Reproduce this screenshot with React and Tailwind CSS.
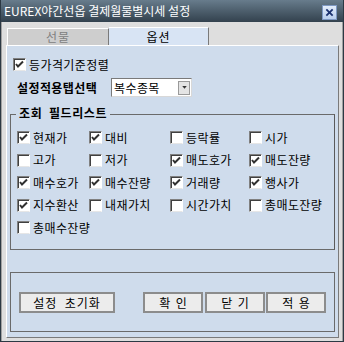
import React from "react";

const font = { fontFamily: '"Noto Sans CJK KR", "Noto Sans", sans-serif' };

function Check({ checked, label }) {
  return (
    <label className="flex items-center h-[13px] gap-[3px] text-[12px] text-black leading-none whitespace-nowrap tracking-[0.4px]">
      <span className="relative w-[13px] h-[13px] shrink-0 bg-white border border-t-[#808080] border-l-[#808080] border-r-white border-b-[#e6e6e6] shadow-[inset_1px_1px_0_#404040]">
        {checked && (
          <svg viewBox="0 0 13 13" className="absolute -left-px -top-px w-[13px] h-[13px]">
            <path d="M3 6 L5 8.5 L10 3.5" fill="none" stroke="#303030" strokeWidth="2" />
          </svg>
        )}
      </span>
      <span>{label}</span>
    </label>
  );
}

function Btn({ children, className = "" }) {
  return (
    <button className={`h-[21px] bg-[#ececec] border-2 border-[#8c8c8c] text-[12px] text-black leading-none ${className}`}>
      {children}
    </button>
  );
}

const fields = [
  ["현재가", true], ["대비", true], ["등락률", false], ["시가", false],
  ["고가", false], ["저가", false], ["매도호가", true], ["매도잔량", true],
  ["매수호가", true], ["매수잔량", true], ["거래량", true], ["행사가", true],
  ["지수환산", true], ["내재가치", false], ["시간가치", false], ["총매도잔량", false],
  ["총매수잔량", false],
];

export default function App() {
  return (
    <div style={font} className="w-[344px] h-[342px] flex flex-col bg-[#dedede] border border-[#2c3944] border-t-0 overflow-hidden">
      {/* title bar */}
      <div className="h-[22px] shrink-0 flex items-center justify-between pl-[3px] pr-[6px] bg-gradient-to-b from-[#687c8c] to-[#33424e]">
        <span className="text-white text-[12px] leading-none">EUREX야간선옵 결제월물별시세 설정</span>
        <span className="w-[15px] h-[15px] mt-[2px] flex items-center justify-center bg-gradient-to-b from-[#e2ecfa] to-[#b9cfee] border border-[#7d98c2]">
          <svg viewBox="0 0 10 10" className="w-[9px] h-[9px]">
            <path d="M1.5 1.5 L8.5 8.5 M8.5 1.5 L1.5 8.5" stroke="#1b3270" strokeWidth="2" />
          </svg>
        </span>
      </div>

      {/* body */}
      <div className="flex-1 flex flex-col pl-[4px] pr-[3px] pb-[3px] pt-[5px] border-l border-r border-[#a0a0a0]">
        {/* tabs */}
        <div className="flex items-end h-[18px] pl-[1px]">
          <div className="w-[102px] h-[17px] flex items-center justify-center bg-[#cecece] border-t border-l border-white border-r border-r-[#7a7a7a] text-[12px] text-[#808080] leading-none tracking-[1px]">
            선물
          </div>
          <div className="w-[100px] h-[18px] flex items-center justify-center bg-[#d8e4f4] border-t border-white border-r border-r-[#7a7a7a] text-[12px] text-black leading-none tracking-[1px]">
            옵션
          </div>
        </div>

        {/* panel */}
        <div className="flex-1 flex flex-col bg-[#cfdcec] border border-t-white border-l-white border-r-[#7a7a7a] border-b-[#7a7a7a] px-[3px] pb-[3px]">
          <div className="pt-[12px] pl-[3px]">
            <Check checked label="등가격기준정렬" />
          </div>

          <div className="flex items-center mt-[7px] pl-[7px] h-[19px]">
            <span className="w-[94px] text-[12px] font-bold tracking-[0.4px] leading-none">설정적용탭선택</span>
            <div className="w-[81px] h-[19px] bg-white border border-t-[#7a7a7a] border-l-[#7a7a7a] border-r-[#d8d8d8] border-b-[#d8d8d8] flex items-center pl-[2px] pr-[1px]">
              <span className="flex-1 text-[12px] leading-none tracking-[0.4px]">복수종목</span>
              <span className="w-[12px] h-[14px] bg-[#e4e4e4] border border-[#9a9a9a] flex items-center justify-center">
                <svg viewBox="0 0 6 4" className="w-[5px] h-[3px]">
                  <path d="M0 0 H6 L3 3.5 Z" fill="#333" />
                </svg>
              </span>
            </div>
          </div>

          {/* field list group */}
          <div className="relative mt-[17px] h-[136px] border border-[#6a6a6a] border-r-[#5a5a5a]">
            <span className="absolute -top-[8px] left-[5px] px-[3px] bg-[#cfdcec] text-[12px] font-bold leading-none tracking-[0.6px]">
              조회&nbsp; 필드리스트
            </span>
            <div className="grid grid-cols-[72px_81px_79px_1fr] gap-y-[9.5px] pt-[16px] pl-[6px]">
              {fields.map(([l, c]) => (
                <Check key={l} checked={c} label={l} />
              ))}
            </div>
          </div>

          {/* buttons group */}
          <div className="mt-[22px] h-[60px] border border-[#6a6a6a] flex items-center pl-[8px] pt-[1px]">
            <Btn className="w-[96px] tracking-[1px]">설정&nbsp; 초기화</Btn>
            <Btn className="w-[60px] ml-[28px]">확&nbsp; 인</Btn>
            <Btn className="w-[60px] ml-[2px]">닫&nbsp; 기</Btn>
            <Btn className="w-[60px] ml-[1px]">적&nbsp; 용</Btn>
          </div>
        </div>
      </div>
    </div>
  );
}
